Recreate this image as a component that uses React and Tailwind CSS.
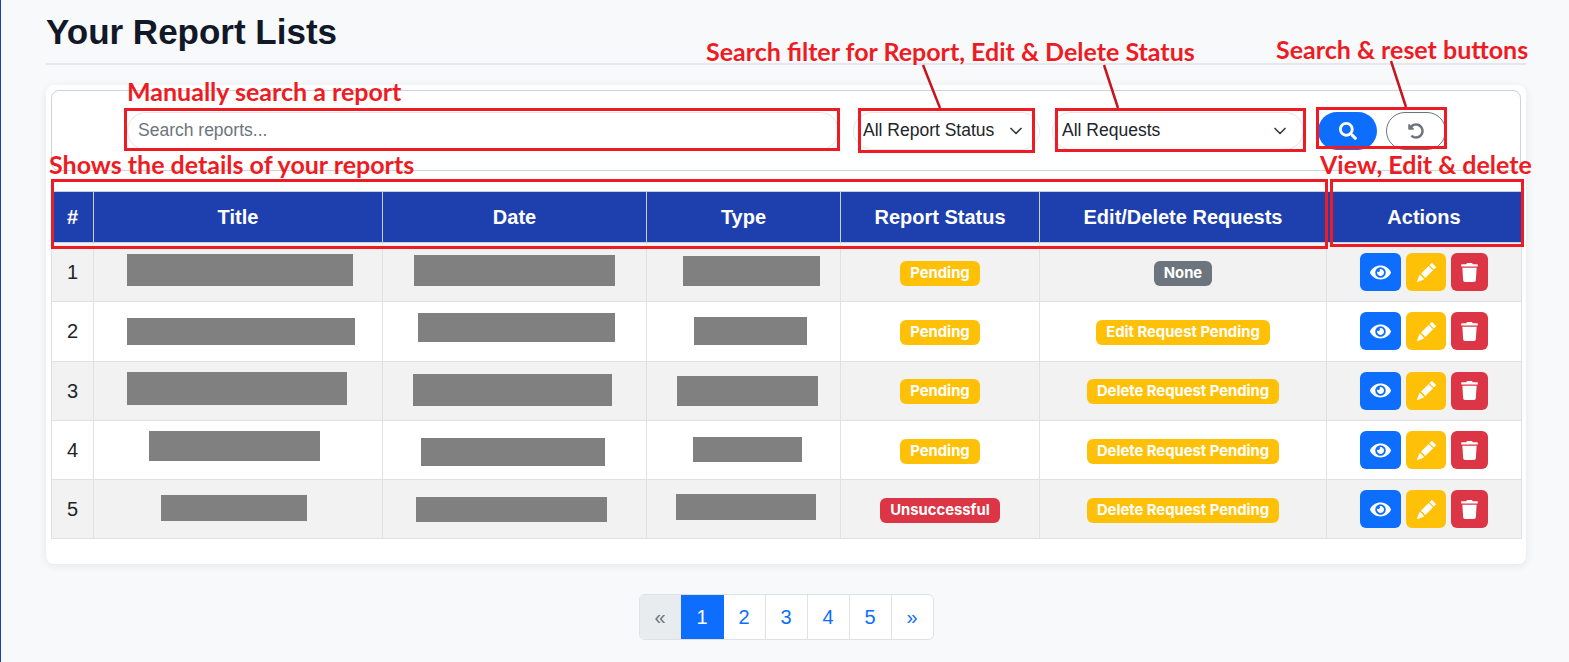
import { ChevronDown } from 'lucide-react';
import { FaEye, FaSearch, FaTrash, FaUndoAlt } from 'react-icons/fa';
import { BsPencilFill } from 'react-icons/bs';

const reports = [
  { id: 1, status: 'Pending', request: 'None' },
  { id: 2, status: 'Pending', request: 'Edit Request Pending' },
  { id: 3, status: 'Pending', request: 'Delete Request Pending' },
  { id: 4, status: 'Pending', request: 'Delete Request Pending' },
  { id: 5, status: 'Unsuccessful', request: 'Delete Request Pending' },
];

const headers = ['#', 'Title', 'Date', 'Type', 'Report Status', 'Edit/Delete Requests', 'Actions'];

// hand-drawn notes and redactions that sit on top of the page
const notes = [
  { text: 'Manually search a report', className: 'left-[127px] top-[76px]' },
  { text: 'Search filter for Report, Edit & Delete Status', className: 'left-[706px] top-[36px]' },
  { text: 'Search & reset buttons', className: 'left-[1276px] top-[34px]' },
  { text: 'Shows the details of your reports', className: 'left-[49px] top-[149px]' },
  { text: 'View, Edit & delete', className: 'left-[1320px] top-[149px]' },
];

const boxes = [
  'left-[124px] top-[108px] w-[716px] h-[43px]',
  'left-[858px] top-[108px] w-[177px] h-[45px]',
  'left-[1055px] top-[108px] w-[251px] h-[44px]',
  'left-[1316px] top-[107px] w-[131px] h-[42px]',
  'left-[51px] top-[179px] w-[1277px] h-[70px]',
  'left-[1330px] top-[179px] w-[194px] h-[68px]',
];

const redactions = [
  'left-[127px] top-[254px] w-[226px] h-[32px]',
  'left-[414px] top-[255px] w-[201px] h-[31px]',
  'left-[683px] top-[256px] w-[137px] h-[30px]',
  'left-[127px] top-[318px] w-[228px] h-[27px]',
  'left-[418px] top-[313px] w-[197px] h-[29px]',
  'left-[694px] top-[317px] w-[113px] h-[28px]',
  'left-[127px] top-[372px] w-[220px] h-[33px]',
  'left-[413px] top-[374px] w-[199px] h-[32px]',
  'left-[677px] top-[376px] w-[141px] h-[30px]',
  'left-[149px] top-[431px] w-[171px] h-[30px]',
  'left-[421px] top-[438px] w-[184px] h-[28px]',
  'left-[693px] top-[437px] w-[109px] h-[25px]',
  'left-[161px] top-[495px] w-[146px] h-[26px]',
  'left-[416px] top-[497px] w-[191px] h-[25px]',
  'left-[676px] top-[494px] w-[140px] h-[26px]',
];

function Badge({ label }) {
  let color = 'bg-[#ffc107]';
  if (label === 'None') color = 'bg-[#6c757d]';
  if (label === 'Unsuccessful') color = 'bg-[#dc3545]';
  return (
    <span className={`mt-[2px] inline-block rounded-md px-2.5 py-1 font-['Inter'] text-[14.8px] leading-[17px] font-bold text-white ${color}`}>
      {label}
    </span>
  );
}

function FilterSelect({ label, className }) {
  return (
    <div className={`relative h-[38px] ${className}`}>
      <select className="h-full w-full appearance-none rounded-full border border-[#e4e6e9] bg-white pl-[9px] text-[17.5px] text-[#212529]">
        <option>{label}</option>
      </select>
      <ChevronDown className="pointer-events-none absolute top-[9px] right-[14px] h-5 w-5 text-[#343a40]" strokeWidth={2} />
    </div>
  );
}

export default function App() {
  return (
    <div className="relative h-[662px] overflow-hidden bg-[#f8f9fa] pr-[43px] pl-[46px] font-['Liberation_Sans',sans-serif] text-[#212529] shadow-[inset_1px_0_0_#1e40af]">
      <h1 className="border-b-2 border-[#e5e7eb] pt-[11px] pb-[11px] text-[35px] leading-[41px] font-bold text-[#111827]">
        Your Report Lists
      </h1>

      <div className="mt-5 rounded-lg bg-white px-[5px] pt-[5px] pb-[25px] shadow-[0_2px_8px_rgba(0,0,0,0.08)]">
        <div className="flex h-[81px] items-center rounded-lg border border-[#ced4da] pr-[75px] pl-[75px]">
          <div className="flex w-full items-center">
            <input
              className="h-[38px] min-w-0 flex-1 rounded-full border border-[#e4e6e9] bg-white pl-[10px] text-[17.5px] placeholder:text-[#6c757d]"
              placeholder="Search reports..."
            />
            <FilterSelect label="All Report Status" className="ml-[14px] w-[187px]" />
            <FilterSelect label="All Requests" className="ml-3 w-[252px]" />
            <button className="ml-[14px] flex h-[38px] w-[59px] items-center justify-center rounded-full bg-[#0d6efd] text-white">
              <FaSearch className="h-[18px] w-[18px]" />
            </button>
            <button className="mr-[-1px] ml-[9px] flex h-[38px] w-[60px] items-center justify-center rounded-full border border-[#6c757d] text-[#6c757d]">
              <FaUndoAlt className="h-4 w-4" />
            </button>
          </div>
        </div>

        <table className="mt-5 w-full table-fixed border-collapse">
          <colgroup>
            <col className="w-[42px]" />
            <col className="w-[289px]" />
            <col className="w-[264px]" />
            <col className="w-[194px]" />
            <col className="w-[199px]" />
            <col className="w-[287px]" />
            <col className="w-[195px]" />
          </colgroup>
          <thead>
            <tr className="h-[51px] bg-[#1e40af] text-white">
              {headers.map((h) => (
                <th key={h} className="border border-[#c5cfe6] text-xl font-bold">
                  {h}
                </th>
              ))}
            </tr>
          </thead>
          <tbody>
            {reports.map((r) => (
              <tr key={r.id} className={r.id % 2 === 1 ? 'h-[59.3px] bg-[#f2f2f2]' : 'h-[59.3px] bg-white'}>
                <td className="border border-[#dee2e6] text-center text-xl">{r.id}</td>
                <td className="border border-[#dee2e6]" />
                <td className="border border-[#dee2e6]" />
                <td className="border border-[#dee2e6]" />
                <td className="border border-[#dee2e6] text-center">
                  <Badge label={r.status} />
                </td>
                <td className="border border-[#dee2e6] text-center">
                  <Badge label={r.request} />
                </td>
                <td className="border border-[#dee2e6]">
                  <div className="flex justify-center gap-[5px] text-white">
                    <button className="flex h-[38px] w-[41px] items-center justify-center rounded-md bg-[#0d6efd]">
                      <FaEye className="h-[21px] w-[21px]" />
                    </button>
                    <button className="flex h-[38px] w-10 items-center justify-center rounded-md bg-[#ffc107]">
                      <BsPencilFill className="h-[19px] w-[19px]" />
                    </button>
                    <button className="flex h-[38px] w-[37px] items-center justify-center rounded-md bg-[#dc3545]">
                      <FaTrash className="h-[19px] w-[19px]" />
                    </button>
                  </div>
                </td>
              </tr>
            ))}
          </tbody>
        </table>
      </div>

      <nav className="mt-[30px] flex justify-center">
        <div className="flex h-[46px] overflow-hidden rounded-md border border-[#dee2e6] bg-white text-xl text-[#0d6efd]">
          <span className="flex w-[41px] items-center justify-center bg-[#e9ecef] text-[#6c757d]">«</span>
          <span className="flex w-[43px] items-center justify-center bg-[#0d6efd] text-white">1</span>
          {['2', '3', '4', '5'].map((p) => (
            <span key={p} className="flex w-[42px] items-center justify-center border-r border-[#dee2e6]">
              {p}
            </span>
          ))}
          <span className="flex w-[41px] items-center justify-center">»</span>
        </div>
      </nav>

      {redactions.map((c) => (
        <div key={c} className={`absolute bg-[#808080] ${c}`} />
      ))}
      {boxes.map((c) => (
        <div key={c} className={`pointer-events-none absolute border-[3px] border-[#ed1c24] ${c}`} />
      ))}
      {notes.map((n) => (
        <span key={n.text} className={`absolute font-['Lato'] text-[25px] leading-[30px] font-bold whitespace-nowrap text-[#ed1c24] ${n.className}`}>
          {n.text}
        </span>
      ))}
      <svg className="pointer-events-none absolute top-0 left-0 h-[200px] w-[1568px]" viewBox="0 0 1568 200">
        <g stroke="#c8141e" strokeWidth="2.5">
          <line x1="923" y1="65" x2="940" y2="108" />
          <line x1="1104" y1="65" x2="1118" y2="108" />
          <line x1="1391" y1="61" x2="1406" y2="107" />
        </g>
      </svg>
    </div>
  );
}
